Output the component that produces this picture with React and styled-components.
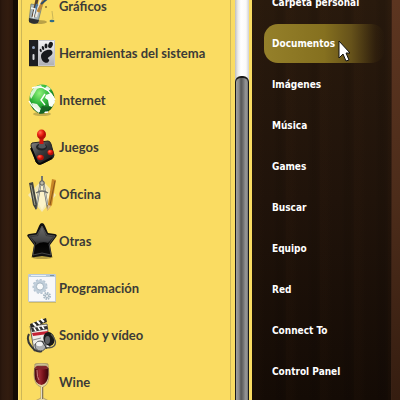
import React, { useState } from 'react';
import styled, { createGlobalStyle } from 'styled-components';

const categories = [
  { name: 'Gráficos', Icon: GraphicsIcon },
  { name: 'Herramientas del sistema', Icon: SystemIcon },
  { name: 'Internet', Icon: InternetIcon },
  { name: 'Juegos', Icon: GamesIcon },
  { name: 'Oficina', Icon: OfficeIcon },
  { name: 'Otras', Icon: StarIcon },
  { name: 'Programación', Icon: CodeIcon },
  { name: 'Sonido y vídeo', Icon: MediaIcon },
  { name: 'Wine', Icon: WineIcon },
];

const places = [
  'Carpeta personal',
  'Documentos',
  'Imágenes',
  'Música',
  'Games',
  'Buscar',
  'Equipo',
  'Red',
  'Connect To',
  'Control Panel',
];

function GraphicsIcon() {
  return (
    <Icon viewBox="0 0 32 38" aria-hidden="true">
      <ellipse cx="12" cy="35" rx="9" ry="2" fill="#8d7a35" opacity=".6" />
      <path d="M5 17 16 19 12 35Q8 38 3 34Z" fill="#a9b6b9" stroke="#65736f" strokeWidth=".7" />
      <path d="M3 31 13 33 12 36Q7 38 3 35Z" fill="#2e3031" />
      <path d="M7 30 13 4" stroke="#57402a" strokeWidth="3" />
      <path d="M10 30 17 5" stroke="#eee9dc" strokeWidth="2" />
      <path d="m8 27 3-10" stroke="#4778a7" strokeWidth="2" />
      <path d="M12 25 21 6" stroke="#c08936" strokeWidth="3" />
      <path d="m15 17 6-5" stroke="#2b4e6c" strokeWidth="2" />
      <path d="m5 21 4 1-2 9" stroke="#f5f7f3" strokeWidth="1.4" fill="none" />
      <circle cx="20" cy="20" r="1" fill="#8c722f" />
      <path d="m26 24 1 8" stroke="#c9b558" />
      <ellipse cx="26" cy="34" rx="2.5" ry="1.3" fill="#326c86" />
    </Icon>
  );
}

function SystemIcon() {
  return (
    <Icon viewBox="0 0 32 38" aria-hidden="true">
      <defs>
        <linearGradient id="plate" x1="0" y1="0" x2="0" y2="1">
          <stop stopColor="#f5f5f6" />
          <stop offset="1" stopColor="#adaeb2" />
        </linearGradient>
      </defs>
      <rect x="3" y="6" width="26" height="27" rx="1" fill="#8b7c3e" opacity=".5" />
      <path d="M3 6h9v26H3z" fill="#1c1e22" />
      <path d="M12 6h17v26H12z" fill="url(#plate)" />
      <path d="M12.5 6.5h16v25h-16z" fill="none" stroke="#c5c6cb" />
      <circle cx="7.5" cy="13.5" r="1.5" fill="#8da0bd" />
      <rect x="6.5" y="20" width="2" height="6" rx="1" fill="#d4d6da" />
      <path d="M15 22c0-5 9-8 11-5 2 4-3 5-4 7-1 1 2 1 1 3-2 4-8 1-8-5z" fill="#17191c" />
      <ellipse cx="24.5" cy="11" rx="2.2" ry="3.3" transform="rotate(20 24.5 11)" fill="#17191c" />
      <ellipse cx="20" cy="12" rx="1.5" ry="2.4" fill="#17191c" />
      <ellipse cx="17" cy="14" rx="1.2" ry="2" transform="rotate(-15 17 14)" fill="#17191c" />
      <ellipse cx="14.7" cy="16.5" rx="1" ry="1.7" transform="rotate(-20 14.7 16.5)" fill="#17191c" />
    </Icon>
  );
}

function InternetIcon() {
  return (
    <Icon viewBox="0 0 32 38" aria-hidden="true">
      <defs>
        <radialGradient id="globe" cx=".4" cy=".3" r=".75">
          <stop stopColor="#8ff17a" />
          <stop offset=".5" stopColor="#2eb63a" />
          <stop offset="1" stopColor="#064614" />
        </radialGradient>
      </defs>
      <ellipse cx="16" cy="33" rx="9" ry="2" fill="#a08f42" opacity=".6" />
      <ellipse cx="16" cy="18" rx="12.5" ry="14.5" fill="url(#globe)" />
      <path d="M4 15Q6 5 15 4l1 2-5 2-3 5-3 5z" fill="#eafae6" opacity=".9" />
      <path d="m20 14 5-2 3 4 1 5-3 5-3-1-1-6-3-2z" fill="#f9fff8" />
      <path d="m6 22 5 1 4 5-2 4q-6-3-7-10zM21 5l4 3-3 2-4-2z" fill="#e7f5e4" />
      <path d="M6 7Q20 2 29 19M3 20Q10 33 22 31M19 13l-4 6 4 5" fill="none" stroke="#fff" strokeWidth="1.4" />
      <path d="m16 25 6 1-4 6-5 1z" fill="#176425" />
    </Icon>
  );
}

function GamesIcon() {
  return (
    <Icon viewBox="0 0 32 38" aria-hidden="true">
      <defs>
        <linearGradient id="pad" x1="0" y1="0" x2="1" y2="1">
          <stop stopColor="#898989" />
          <stop offset=".45" stopColor="#3a3b3d" />
          <stop offset="1" stopColor="#111" />
        </linearGradient>
        <radialGradient id="knob" cx=".35" cy=".3">
          <stop stopColor="#ff7055" />
          <stop offset=".6" stopColor="#ed2415" />
          <stop offset="1" stopColor="#b70f08" />
        </radialGradient>
      </defs>
      <path d="m6 15 16-2q2 0 3 3l3 11q0 3-3 4l-10 5q-3 1-5-2L5 18q0-2 1-3z" fill="url(#pad)" stroke="#242424" />
      <path d="m5 20 6 14q2 3 5 1l10-5" fill="none" stroke="#080808" strokeWidth="2" />
      <ellipse cx="15.5" cy="19" rx="5.5" ry="3.5" fill="#202124" />
      <path d="m12 19 2-5h4l2 5q-4 3-8 0z" fill="#55575b" />
      <path d="M13.5 8h4v8h-4z" fill="#cf170e" />
      <ellipse cx="15.5" cy="6.5" rx="4.5" ry="5" fill="url(#knob)" />
      <ellipse cx="14.5" cy="29.5" rx="3.3" ry="2.8" fill="url(#knob)" />
      <ellipse cx="24.5" cy="24.5" rx="3" ry="2.7" fill="url(#knob)" />
    </Icon>
  );
}

function OfficeIcon() {
  return (
    <Icon viewBox="0 0 32 38" aria-hidden="true">
      <path d="m16 5 14 15-14 17L2 20z" fill="#f5e9b4" />
      <path d="m16 8 8 12-8 15-8-15z" fill="#fff7d1" opacity=".7" />
      <path d="m15 6-5 28M17 6l5 28" stroke="#6e716b" strokeWidth="2" />
      <path d="m14.5 9-4 21M17.5 9l4 21" stroke="#dfe2dd" strokeWidth=".8" />
      <path d="M10 18q6-4 12 0" fill="none" stroke="#6a6c67" strokeWidth="1.4" />
      <path d="M16 1v7" stroke="#74766f" strokeWidth="2" />
      <circle cx="16" cy="8" r="2.2" fill="#bbb9a8" stroke="#5a5b55" />
      <path d="m3 8 4-1 4 22-1 6-3-5z" fill="#42443f" />
      <path d="m5 10 4 20" stroke="#a0a18e" />
      <path d="m26 4 4 1-4 25-5 6 1-7z" fill="#c88727" />
      <path d="m29 6-5 24" stroke="#89551a" />
      <path d="m22 30 3 1-4 5z" fill="#ddc497" />
    </Icon>
  );
}

function StarIcon() {
  return (
    <Icon viewBox="0 0 32 38" aria-hidden="true">
      <defs>
        <linearGradient id="star" x1="0" y1="0" x2="0" y2="1">
          <stop stopColor="#5c5c5c" />
          <stop offset=".5" stopColor="#242526" />
          <stop offset=".6" stopColor="#020202" />
          <stop offset="1" stopColor="#0c0c0c" />
        </linearGradient>
      </defs>
      <ellipse cx="16" cy="35" rx="11" ry="2" fill="#887630" opacity=".6" />
      <path d="M16 1q2 0 3 3l3 7 7 1q3 1 1 3l-6 8 2 11q0 2-3 1l-7-1-7 1q-3 1-3-1l2-11-6-8q-2-2 1-3l7-1 3-7q1-3 3-3z" fill="#111" />
      <path d="m16 4 5 9 8 1-6 8 2 11-9-2-9 2 2-11-6-8 8-1z" fill="url(#star)" stroke="#5c5c5c" strokeWidth=".7" strokeLinejoin="round" />
      <path d="m16 5 4 9 7 1-5 6q-6-3-12 2v-2l-5-6 7-1z" fill="#929292" opacity=".3" />
    </Icon>
  );
}

function CodeIcon() {
  return (
    <Icon viewBox="0 0 32 38" aria-hidden="true">
      <path d="M3 6h27v28H3z" fill="#a99958" opacity=".5" />
      <path d="M2.5 5.5h27v27h-27z" fill="#f7f8fa" stroke="#c4cbd1" />
      <path d="M3 5h26v3H3z" fill="#b8cada" />
      <path d="M5 6.5h15" stroke="#e7eff6" />
      <path d="M24 6.5h4" stroke="#7c92a6" />
      <circle cx="14" cy="17.5" r="6" fill="none" stroke="#b4c4d1" strokeWidth="3" strokeDasharray="2 1.4" />
      <circle cx="14" cy="17.5" r="5" fill="none" stroke="#c0ceda" strokeWidth="3" />
      <circle cx="14" cy="17.5" r="3.6" fill="#f8fafb" stroke="#91a5b4" strokeWidth=".8" />
      <circle cx="21" cy="27" r="3" fill="#e8eef2" stroke="#a9b9c5" strokeWidth="2" strokeDasharray="1.5 .8" />
      <circle cx="21" cy="27" r="1.5" fill="#fff" stroke="#8fa2b0" strokeWidth=".8" />
    </Icon>
  );
}

function MediaIcon() {
  return (
    <Icon viewBox="0 0 32 38" aria-hidden="true">
      <path d="m4 10 17-2 3 23-16 4z" fill="#eeece8" stroke="#444" strokeWidth=".8" />
      <path d="m4 8 16-6 1 4-16 6z" fill="#262626" />
      <path d="m7 7 3 3m1-5 3 3m1-5 3 3" stroke="#fff" strokeWidth="2" />
      <path d="m5 12 16-2 1 3-16 3z" fill="#333" />
      <path d="m8 12 2 3m2-4 2 3m2-4 2 3" stroke="#fff" strokeWidth="1.5" />
      <path d="m6 17 16-2v3L7 20z" fill="#c42233" />
      <path d="m7 24 8-2M8 29l8-2" stroke="#8c8c8c" />
      <path d="M3 18q-3 6 2 12 5 7 11 5" fill="none" stroke="#343638" strokeWidth="2" />
      <ellipse cx="23" cy="23" rx="5.5" ry="7" transform="rotate(-15 23 23)" fill="#171819" />
      <ellipse cx="21.5" cy="24" rx="2.5" ry="4" fill="#626467" />
      <path d="M25 18q7 8 3 12-3 3-10 1" fill="none" stroke="#54564f" strokeWidth="1.3" />
      <ellipse cx="14.5" cy="30" rx="5.5" ry="5" fill="#aeb0b2" stroke="#4a4b4e" />
      <ellipse cx="13.5" cy="28" rx="3.3" ry="2.2" fill="#f4f4f4" />
      <path d="m16 25 5 8" stroke="#38393a" />
    </Icon>
  );
}

function WineIcon() {
  return (
    <Icon viewBox="0 0 32 38" aria-hidden="true">
      <defs>
        <linearGradient id="wine">
          <stop stopColor="#3f070c" />
          <stop offset=".35" stopColor="#9e2933" />
          <stop offset=".65" stopColor="#721019" />
          <stop offset="1" stopColor="#35050a" />
        </linearGradient>
      </defs>
      <path d="M9 1h13l1 10q0 11-6 13v11l6 3H9l6-3V24Q8 22 8 11z" fill="#e5d5a0" stroke="#9c8b60" strokeWidth=".7" />
      <path d="M8.5 5q6 2 14 0v7q-1 9-7 10-7-1-7-10z" fill="url(#wine)" />
      <ellipse cx="15.5" cy="4.5" rx="6.5" ry="2" fill="#81242b" />
      <ellipse cx="15.5" cy="1.5" rx="6.5" ry="1.2" fill="#cdbf98" stroke="#8e8060" strokeWidth=".5" />
      <path d="M11 7q0 8 2 10" fill="none" stroke="#c57d7d" />
      <path d="M16 24v12" stroke="#867758" strokeWidth="2" />
      <path d="M15.5 24v12" stroke="#fff8df" strokeWidth=".8" />
    </Icon>
  );
}

function App() {
  const [active, setActive] = useState('Documentos');

  return (
    <>
      <GlobalStyle />
      <Menu>
        <WoodLeft />
        <ProgramPanel>
          <CategoryList>
            {categories.map(({ name, Icon: CategoryIcon }) => (
              <li key={name}>
                <CategoryButton type="button">
                  <CategoryIcon />
                  {name}
                </CategoryButton>
              </li>
            ))}
          </CategoryList>
          <ScrollTrack>
            <ScrollThumb />
          </ScrollTrack>
        </ProgramPanel>
        <PlacesPanel>
          {places.map((name) => (
            <PlaceButton
              key={name}
              type="button"
              $active={name === active}
              onClick={() => setActive(name)}
            >
              {name}
              {name === active && (
                <Pointer viewBox="0 0 12 22" aria-hidden="true">
                  <path d="M1 1v17l4-4 3 7 3-1-3-7h4z" fill="#fff" stroke="#111" strokeLinejoin="round" />
                </Pointer>
              )}
            </PlaceButton>
          ))}
        </PlacesPanel>
        <WoodRight />
      </Menu>
    </>
  );
}

export default App;

const GlobalStyle = createGlobalStyle`
  * {
    box-sizing: border-box;
  }
  body {
    margin: 0;
    background: #1c0f07;
  }
`;

const Menu = styled.main`
  display: grid;
  grid-template-columns: 18px minmax(0, 1fr) 139px 9px;
  height: 100vh;
  overflow: hidden;
`;

const WoodLeft = styled.div`
  border-right: 5px solid #130b04;
  background: linear-gradient(90deg, #24130a 0, #2c190e 2px, #321c0f 8px, #29160b 13px);
`;

const WoodRight = styled.div`
  border-left: 1px solid #382014;
  background: linear-gradient(#5c3520, #4c2c1a 50%, #351d10);
`;

const ProgramPanel = styled.section`
  display: flex;
  min-width: 0;
  min-height: 0;
  padding: 0 3px 0 2px;
  border-left: 1px solid #ffe37a;
  background: #fadc62;
`;

const CategoryList = styled.ul`
  flex: 1;
  min-width: 0;
  margin: 0 4px 0 0;
  padding: 0;
  list-style: none;
  border-left: 1px solid #cdb757;
  border-right: 1px solid #cdb757;

  li:first-child {
    margin-top: -18px;
  }
`;

const CategoryButton = styled.button`
  display: flex;
  align-items: center;
  gap: 1px;
  width: 100%;
  height: 47px;
  padding: 0 0 0 4px;
  border: none;
  background: transparent;
  color: #3c3b37;
  font-family: Lato, 'Noto Sans', sans-serif;
  font-size: 13px;
  font-weight: 700;
  line-height: 20px;
  text-align: left;
  white-space: nowrap;
`;

const Icon = styled.svg`
  flex: none;
  width: 32px;
  height: 38px;
`;

const ScrollTrack = styled.div`
  flex: none;
  width: 14px;
  padding-top: 76px;
  background: linear-gradient(90deg, #bfbfbf, #ececec 3px, #fff 6px, #fafafa 11px, #d0d0d0);
`;

const ScrollThumb = styled.div`
  height: 100%;
  border: 1px solid #191919;
  border-top-width: 2px;
  border-bottom: none;
  border-radius: 6px 6px 0 0;
  background: linear-gradient(90deg, #a0a0a0, #898989 3px, #555 5px, #6c6c6c 7px, #999 10px, #777);
`;

const PlacesPanel = styled.nav`
  display: flex;
  flex-direction: column;
  gap: 2px;
  min-height: 0;
  padding: 0 6px 0 12px;
  background:
    repeating-linear-gradient(90deg, rgba(80, 45, 20, 0.06) 0 6px, transparent 12px 21px, rgba(0, 0, 0, 0.08) 26px 30px, transparent 34px),
    linear-gradient(#291a0d, #20130a 50%, #140b05);
`;

const PlaceButton = styled.button`
  position: relative;
  flex: none;
  height: 39px;
  padding: 0 8px;
  border: none;
  border-radius: 14px;
  background: ${({ $active }) =>
    $active ? 'linear-gradient(90deg, #95802a, #85701f 50%, #66521a 72%, rgba(60, 42, 14, 0.4) 92%, transparent)' : 'transparent'};
  color: #fff;
  font-family: 'DejaVu Sans Condensed', 'Noto Sans', sans-serif;
  font-size: 10px;
  font-weight: 700;
  line-height: 16px;
  text-align: left;
  white-space: nowrap;

  &:first-child {
    margin-top: -17px;
  }
`;

const Pointer = styled.svg`
  position: absolute;
  top: 16px;
  left: 74px;
  width: 12px;
  height: 22px;
`;
